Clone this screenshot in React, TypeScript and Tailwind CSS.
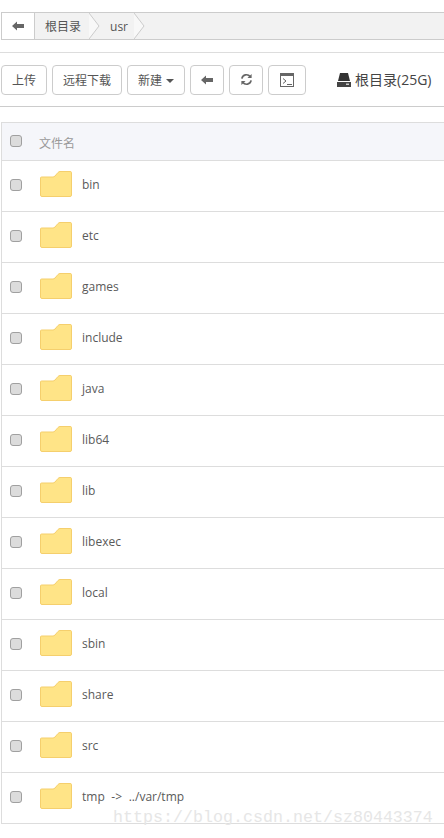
import React from "react";

const names = ["bin","etc","games","include","java","lib64","lib","libexec","local","sbin","share","src","tmp -> ../var/tmp"];
const font = { fontFamily: '"Open Sans","Noto Sans CJK SC",sans-serif' };

function BackIcon() {
  return (
    <svg width="12" height="10" viewBox="0 0 12 10" fill="#666">
      <path d="M0 5 L5 0.5 L5 3 L12 3 L12 7 L5 7 L5 9.5 Z" />
    </svg>
  );
}
function Chevron() {
  return (
    <svg width="11" height="26" viewBox="0 0 11 26" className="shrink-0">
      <path d="M0 0 L10 13 L0 26 Z" fill="#f8f8f8" />
      <path d="M0 0 L10 13 L0 26" fill="none" stroke="#ccc" />
    </svg>
  );
}
function Check({ className = "" }: { className?: string }) {
  return <div className={`w-3 h-3 rounded-[3px] border border-[#a0a0a0] bg-[#dcdcdc] shrink-0 ${className}`} />;
}
function Folder() {
  return (
    <svg width="32" height="26" viewBox="0 0 32 26" className="shrink-0">
      <path d="M1.500 6 Q0.500 6 0.500 7 V24 Q0.500 25.500 2 25.500 H30 Q31.500 25.500 31.500 24 V1.500 Q31.500 0.500 30 0.500 H20 Q19 0.500 18 1.500 L15 5 Q14 6 13 6 Z" fill="#ffe487" stroke="#f5cf6d" />
    </svg>
  );
}
function Btn({ children, className }: { children: React.ReactNode; className: string }) {
  return (
    <div className={`h-[30px] flex items-center justify-center rounded border border-[#ccc] bg-white text-xs text-[#555] ${className}`}>
      {children}
    </div>
  );
}

export default function App() {
  return (
    <div className="relative w-[444px] h-[838px] overflow-hidden bg-white" style={font}>
      <div className="pt-3 pl-px">
        <div className="h-7 flex items-stretch border border-[#ccc] border-r-0 bg-[#f2f2f2] text-xs text-[#555]">
          <div className="w-[33px] bg-white border-r border-[#ccc] flex items-center justify-center"><BackIcon /></div>
          <div className="flex items-center pl-[10px] pr-[8px] pt-px">根目录</div>
          <Chevron />
          <div className="flex items-center pl-[10px] pr-[6px] pt-px">usr</div>
          <Chevron />
        </div>
      </div>
      <div className="mt-3 border-t border-[#ddd] h-[55px] flex items-center pl-px border-b border-b-[#ccc]">
        <Btn className="w-[46px] pt-[2px]">上传</Btn>
        <Btn className="w-[70px] ml-[5px] pt-[2px]">远程下载</Btn>
        <Btn className="w-[58px] ml-[5px] gap-1 pt-[2px]">
          新建
          <span className="w-0 h-0 border-x-4 border-x-transparent border-t-4 border-t-[#555]" />
        </Btn>
        <Btn className="w-[34px] ml-[5px]"><BackIcon /></Btn>
        <Btn className="w-[34px] ml-[5px]">
          <svg width="13" height="13" viewBox="0 0 14 14" fill="none" stroke="#666" strokeWidth="1.800">
            <path d="M2 6 A5 5 0 0 1 11 4" />
            <path d="M12 8 A5 5 0 0 1 3 10" />
            <path d="M12.500 1 V5.500 H8 Z" fill="#666" stroke="none" />
            <path d="M1.500 13 V8.500 H6 Z" fill="#666" stroke="none" />
          </svg>
        </Btn>
        <Btn className="w-[38px] ml-[5px]">
          <svg width="14" height="14" viewBox="0 0 14 14">
            <rect x="0.500" y="0.500" width="13" height="13" fill="none" stroke="#666" />
            <rect x="0" y="0" width="14" height="3" fill="#666" />
            <path d="M3 5.500 L6 8 L3 10.500" fill="none" stroke="#666" />
            <path d="M7 11.500 H12" stroke="#666" />
          </svg>
        </Btn>
        <div className="ml-[31px] flex items-center gap-[4px] text-sm text-[#444]">
          <svg width="14" height="14" viewBox="0 0 14 14">
            <path d="M3 0 H11 L13 8 H1 Z" fill="#333" />
            <rect x="0" y="9" width="14" height="5" fill="#444" />
            <rect x="9" y="10.500" width="3" height="1.500" fill="#ccc" />
          </svg>
          根目录(25G)
        </div>
      </div>
      <div className="mt-[15px] ml-px w-[460px] border-l border-t border-[#ddd]">
        <div className="h-[38px] bg-[#f5f6fa] border-b border-[#ddd] flex items-center pl-2 text-xs text-[#999]">
          <Check className="-mt-px" />
          <span className="ml-[17px] mt-[4px]">文件名</span>
        </div>
        {names.map((n) => (
          <div key={n} className="h-[51px] border-b border-[#ddd] flex items-center pl-2 pb-[2px] text-xs text-[#5a5a5a]">
            <Check />
            <div className="ml-[18px] -mt-[2px]"><Folder /></div>
            <span className="ml-[10px] whitespace-pre [word-spacing:3.500px]">{n}</span>
          </div>
        ))}
      </div>
      <div className="absolute left-[113px] top-[808px] text-[16.67px] leading-5 text-[#e6e6e6] whitespace-pre" style={{ fontFamily: '"Liberation Mono",monospace' }}>
        https://blog.csdn.net/sz80443374
      </div>
    </div>
  );
}
